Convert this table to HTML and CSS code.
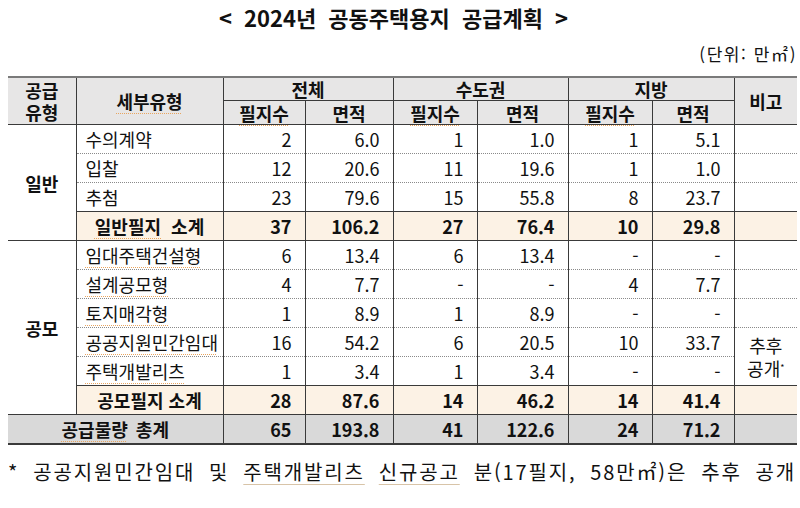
FILE: index.html
```html
<!DOCTYPE html>
<html lang="ko">
<head>
<meta charset="utf-8">
<title>2024년 공동주택용지 공급계획</title>
<link rel="stylesheet" href="styles.css">
</head>
<body>
<div class="page">
  <h1 class="title">&lt; 2024년 공동주택용지 공급계획 &gt;</h1>
  <div class="unit">(단위: 만㎡)</div>
  <table class="plan">
    <colgroup>
      <col class="w-type"><col class="w-sub">
      <col class="w-a"><col class="w-b"><col class="w-c"><col class="w-d"><col class="w-e"><col class="w-f">
      <col class="w-note">
    </colgroup>
    <thead>
      <tr class="hr1">
        <th rowspan="2" class="first stack"><span class="ln">공급</span><span class="ln">유형</span></th>
        <th rowspan="2"><span class="sp">세부유형</span></th>
        <th colspan="2">전체</th>
        <th colspan="2" class="grp">수도권</th>
        <th colspan="2" class="grp">지방</th>
        <th rowspan="2">비고</th>
      </tr>
      <tr class="hr2">
        <th><span class="sp">필지수</span></th><th>면적</th>
        <th class="grp"><span class="sp">필지수</span></th><th>면적</th>
        <th class="grp"><span class="sp">필지수</span></th><th>면적</th>
      </tr>
    </thead>
    <tbody>
      <tr class="row gstart">
        <td rowspan="4" class="first grp-label">일반</td>
        <td class="name">수의계약</td><td>2</td><td>6.0</td><td class="grp">1</td><td>1.0</td><td class="grp">1</td><td>5.1</td><td class="note"></td>
      </tr>
      <tr class="row">
        <td class="name">입찰</td><td>12</td><td>20.6</td><td class="grp">11</td><td>19.6</td><td class="grp">1</td><td>1.0</td><td class="note"></td>
      </tr>
      <tr class="row">
        <td class="name">추첨</td><td>23</td><td>79.6</td><td class="grp">15</td><td>55.8</td><td class="grp">8</td><td>23.7</td><td class="note"></td>
      </tr>
      <tr class="row sub">
        <td class="name sum"><span class="sp">일반필지</span>&nbsp; 소계</td><td>37</td><td>106.2</td><td class="grp">27</td><td>76.4</td><td class="grp">10</td><td>29.8</td><td class="note"></td>
      </tr>
      <tr class="row gstart">
        <td rowspan="6" class="first grp-label">공모</td>
        <td class="name"><span class="sp">임대주택건설형</span></td><td>6</td><td>13.4</td><td class="grp">6</td><td>13.4</td><td class="grp">-</td><td>-</td><td class="note"></td>
      </tr>
      <tr class="row">
        <td class="name"><span class="sp">설계공모형</span></td><td>4</td><td>7.7</td><td class="grp">-</td><td>-</td><td class="grp">4</td><td>7.7</td><td class="note"></td>
      </tr>
      <tr class="row">
        <td class="name"><span class="sp">토지매각형</span></td><td>1</td><td>8.9</td><td class="grp">1</td><td>8.9</td><td class="grp">-</td><td>-</td><td class="note"></td>
      </tr>
      <tr class="row">
        <td class="name"><span class="sp">공공지원민간임대</span></td><td>16</td><td>54.2</td><td class="grp">6</td><td>20.5</td><td class="grp">10</td><td>33.7</td>
        <td rowspan="2" class="note later"><span class="ln">추후</span><span class="ln">공개<sup>*</sup></span></td>
      </tr>
      <tr class="row">
        <td class="name"><span class="sp">주택개발리츠</span></td><td>1</td><td>3.4</td><td class="grp">1</td><td>3.4</td><td class="grp">-</td><td>-</td>
      </tr>
      <tr class="row sub">
        <td class="name sum">공모필지 소계</td><td>28</td><td>87.6</td><td class="grp">14</td><td>46.2</td><td class="grp">14</td><td>41.4</td><td class="note"></td>
      </tr>
      <tr class="row total">
        <td colspan="2" class="first sum"><span class="sp">공급물량</span> 총계</td><td>65</td><td>193.8</td><td class="grp">41</td><td>122.6</td><td class="grp">24</td><td>71.2</td><td class="note"></td>
      </tr>
    </tbody>
  </table>
  <p class="footnote">* 공공지원민간임대 및 <span class="ul">주택개발리츠</span> <span class="ul">신규공고</span> 분(17필지, 58만㎡)은 추후 공개</p>
</div>
</body>
</html>
```

FILE: styles.css
```css
html, body {
  margin: 0;
  padding: 0;
  background: #ffffff;
}

body {
  font-family: "Noto Sans CJK KR", "Noto Sans", sans-serif;
  color: #111;
}

.page {
  width: 800px;
  height: 508px;
  padding: 0 0 0 8px;
  box-sizing: border-box;
  overflow: hidden;
}

.title {
  margin: 0;
  padding: 4px 21px 0 0;
  height: 31px;
  box-sizing: border-box;
  text-align: center;
  font-size: 22px;
  line-height: 27px;
  font-weight: 700;
  word-spacing: 6px;
}

.unit {
  text-align: right;
  font-size: 17px;
  line-height: 22px;
  height: 45px;
  padding: 12px 3px 0 0;
  box-sizing: border-box;
  letter-spacing: 1.6px;
}

.plan {
  width: 789px;
  border-collapse: collapse;
  table-layout: fixed;
  font-size: 18px;
}

.w-type { width: 68px; }
.w-sub { width: 147px; }
.w-a { width: 82px; }
.w-b { width: 88px; }
.w-c { width: 84px; }
.w-d { width: 91px; }
.w-e { width: 84px; }
.w-f { width: 82px; }
.w-note { width: 63px; }

.plan th,
.plan td {
  padding: 0;
  border-left: 1px solid #3a3a3a;
}

.plan .first {
  border-left: none;
}

.plan th {
  background: #e7e6e6;
  font-weight: 700;
  text-align: center;
  line-height: 22px;
}

.hr1 th {
  border-top: 2px solid #7a7a7a;
  height: 21px;
  border-bottom: 1px solid #3a3a3a;
}

.hr2 th {
  height: 23px;
  border-bottom: 1px solid #3a3a3a;
}

.ln {
  display: block;
  height: 22px;
  line-height: 22px;
}

.plan td {
  height: 28px;
  text-align: right;
  padding-right: 13px;
  line-height: 22px;
  border-top: 1px dotted #8a8a8a;
}

.plan td.name {
  text-align: left;
  padding-left: 9px;
  padding-right: 0;
}

.plan td.note {
  padding-right: 0;
}

.plan td.grp-label {
  text-align: center;
  padding-right: 0;
  font-weight: 700;
  border-top: 1px solid #3a3a3a;
  border-bottom: 1px solid #3a3a3a;
}

.plan tr.gstart td {
  border-top: 1px solid #3a3a3a;
}

.plan tr.sub td {
  background: #fcf2e5;
  font-weight: 700;
  border-top: 1px solid #3a3a3a;
}

.plan tr.sub td.sum {
  text-align: center;
  padding-left: 0;
}

.plan tr.total td {
  background: #d9d9d9;
  font-weight: 700;
  border-top: 1px solid #3a3a3a;
  border-bottom: 2px solid #3a3a3a;
}

.plan tr.total td.sum {
  text-align: center;
  padding-right: 0;
  word-spacing: 3px;
}

.plan td.later {
  text-align: center;
  vertical-align: middle;
  font-weight: 400;
  border-top: 1px dotted #8a8a8a;
}

.later .ln {
  height: 23px;
  line-height: 23px;
}

.later sup {
  font-size: 9px;
  vertical-align: 5px;
  line-height: 0;
}

.sp {
  text-decoration: underline dotted #e8a560;
  text-underline-offset: 4px;
  text-decoration-thickness: 1px;
}

.footnote {
  margin: 13px 0 0 0;
  font-size: 20px;
  line-height: 28px;
  letter-spacing: 1.85px;
  word-spacing: 6.5px;
  white-space: nowrap;
}

.ul {
  text-decoration: underline solid #d8c4a8;
  text-underline-offset: 4px;
  text-decoration-thickness: 1px;
}
```
